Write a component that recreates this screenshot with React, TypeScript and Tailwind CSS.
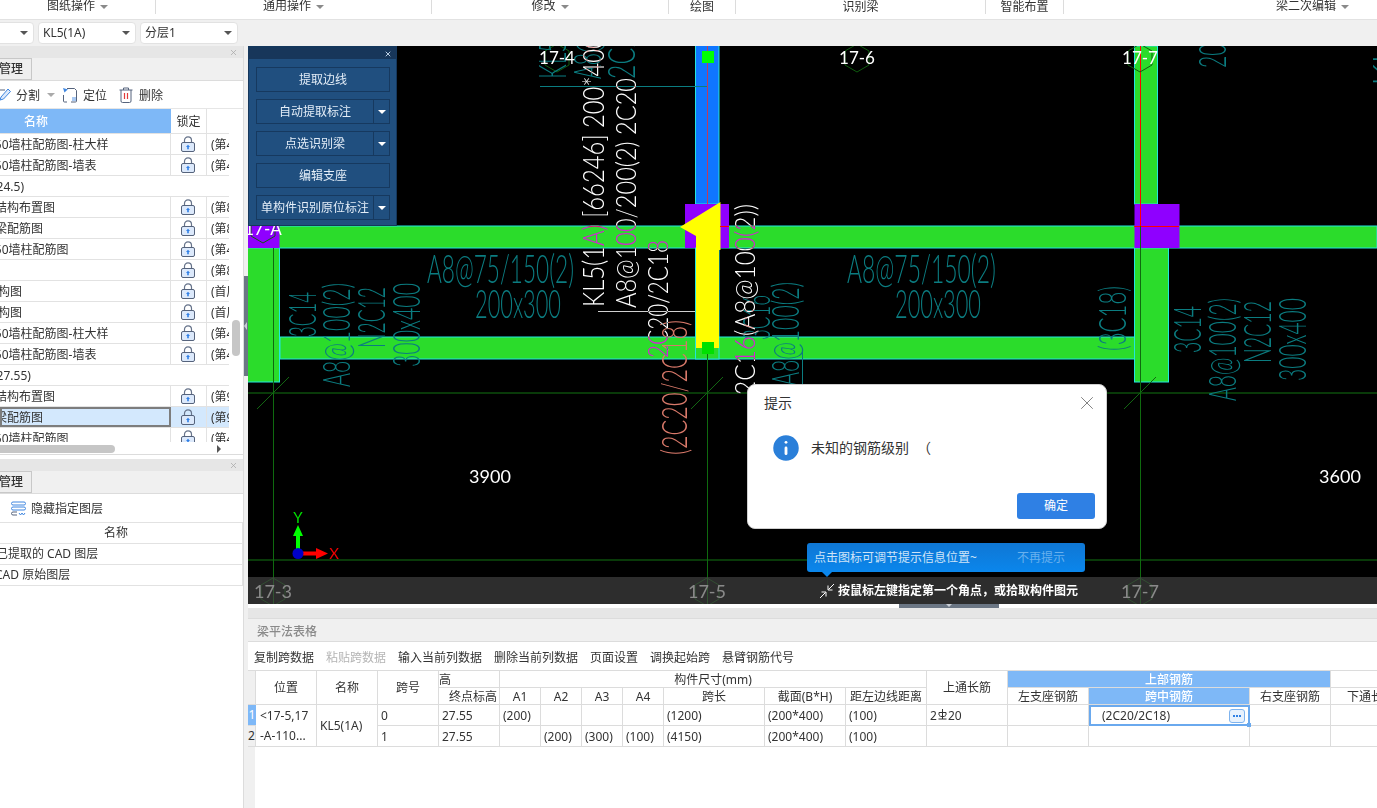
import React from 'react';
import { X, Info } from 'lucide-react';

const sans = "[font-family:'Noto_Sans','Noto_Sans_CJK_SC',sans-serif]";

const ribbon = [
    { label: '图纸操作', width: 'w-[156px]', caret: true },
    { label: '通用操作', width: 'w-[276px]', caret: true },
    { label: '修改', width: 'w-[237px]', caret: true },
    { label: '绘图', width: 'w-[67px]' },
    { label: '识别梁', width: 'w-[250px]' },
    { label: '智能布置', width: 'w-[78px]' },
    { label: '梁二次编辑', width: 'flex-1 pl-[184px] border-r-0', caret: true },
];

const layerRows = [
    { name: '150墙柱配筋图-柱大样', page: '(第4' },
    { name: '150墙柱配筋图-墙表', page: '(第4' },
    { group: '(24.5)' },
    { name: '结构布置图', page: '(第8', off: '-ml-[5px]' },
    { name: '梁配筋图', page: '(第8', off: '-ml-[5px]' },
    { name: '150墙柱配筋图', page: '(第4' },
    { name: '', page: '(第8' },
    { name: '结构图', page: '(首层', off: '-ml-[14px]' },
    { name: '结构图', page: '(首层', off: '-ml-[14px]' },
    { name: '150墙柱配筋图-柱大样', page: '(第4' },
    { name: '150墙柱配筋图-墙表', page: '(第4' },
    { group: '(27.55)' },
    { name: '结构布置图', page: '(第9', off: '-ml-[5px]' },
    { name: '梁配筋图', page: '(第9', off: '-ml-[7px]', selected: true },
    { name: '150墙柱配筋图', page: '(第4' },
];

const tableTools = ['复制跨数据', '粘贴跨数据', '输入当前列数据', '删除当前列数据', '页面设置', '调换起始跨', '悬臂钢筋代号'];

const LockIcon = () => (
    <svg width="14" height="16" viewBox="0 0 14 16" className="block">
        <path d="M3.500 7V4.300a3.500 3.500 0 0 1 7 0V7" fill="none" stroke="#66738a" strokeWidth="1.200" />
        <rect x="0.500" y="6.500" width="13" height="9" rx="1.500" fill="#dce9fb" stroke="#55637c" />
        <path d="M7 8.800l2 2.200H7.800v2.300H6.200V11H5z" fill="#2f7fe6" />
    </svg>
);

const Caret = ({ className = '' }: { className?: string }) => (
    <span className={`inline-block w-0 h-0 border-x-[4px] border-x-transparent border-t-[4px] border-t-[#8a8a8a] ${className}`} />
);

const Select = ({ text, width }: { text: string; width: string }) => (
    <div className={`${width} h-[22px] bg-white border border-[#e2e2e2] rounded-[4px] flex items-center justify-between pl-1 pr-[5px] text-xs text-[#333]`}>
        <span>{text}</span>
        <Caret className="border-t-[#555]" />
    </div>
);

const PanelHead = ({ label }: { label: string }) => (
    <>
        <div className="h-[12px] shrink-0 bg-[#e6e6e6] flex items-center justify-end pr-[5px]">
            <X size={9} className="text-[#a8a8a8]" />
        </div>
        <div className="h-[23px] shrink-0 bg-[#f0f0f0] border-b border-[#dcdcdc] flex">
            <div className="w-[32px] border-r border-y border-[#c8c8c8] bg-[#eeeeee] text-xs font-medium text-[#333] flex items-center justify-end pr-[8px] whitespace-nowrap">
                {label}
            </div>
        </div>
    </>
);

const Sidebar = () => (
    <div className="w-[244px] shrink-0 bg-white border-r border-[#dcdcdc] flex flex-col overflow-hidden">
        <div className="h-[409px] shrink-0 flex flex-col border-b border-[#dcdcdc]">
            <PanelHead label="管理" />
            <div className="h-[28px] flex items-center text-xs text-[#333] border-b border-[#e6e6e6] shrink-0">
                <svg width="11" height="16" viewBox="0 0 11 16" className="shrink-0">
                    <path d="M0 3h5" stroke="#55637c" fill="none" />
                    <path d="M8 2l2.500 2.500-7 7.500L0 13l1-3z" fill="#dce9fb" stroke="#3f86e0" />
                </svg>
                <span className="ml-[5px] pt-[2px]">分割</span>
                <Caret className="ml-[7px] border-x-[3px] border-t-[3px] border-t-[#aaa]" />
                <svg width="16" height="16" viewBox="0 0 16 16" className="ml-[7px] shrink-0">
                    <path d="M5 1.500h7.500l2 2V14a1 1 0 0 1-1 1H9M1.500 8v6a1 1 0 0 0 1 1H5" fill="none" stroke="#55637c" />
                    <path d="M1 1l5 1.500L4.300 3.700 2.500 5.500z" fill="#3f86e0" />
                    <rect x="10" y="10" width="4" height="4" fill="#a9c9f2" />
                </svg>
                <span className="ml-[5px] pt-[2px]">定位</span>
                <svg width="14" height="16" viewBox="0 0 14 16" className="ml-[12px] shrink-0">
                    <path d="M0.500 3h13M4.500 3V1h5v2M2 3v11a1.500 1.500 0 0 0 1.500 1.500h7A1.500 1.500 0 0 0 12 14V3" fill="none" stroke="#55637c" />
                    <path d="M5.500 6v6M8.500 6v6" stroke="#e23b3b" strokeWidth="1.200" />
                </svg>
                <span className="ml-[6px] pt-[2px]">删除</span>
            </div>
            <div className="flex-1 flex min-h-0">
                <div className="w-[229px] flex flex-col overflow-hidden">
                    <div className="flex flex-col h-[333px] overflow-hidden shrink-0">
                        <div className="h-[25px] flex shrink-0 border-b border-[#e2e2e2] text-xs">
                            <div className="w-[171px] bg-[#7eb8f7] text-white font-medium flex items-center pl-[24px] pt-[2px]">名称</div>
                            <div className="w-[36px] border-r border-[#e2e2e2] text-[#333] flex items-center justify-center pt-[2px]">锁定</div>
                        </div>
                        {layerRows.map((row, i) =>
                            row.group ? (
                                <div key={i} className="h-[21px] shrink-0 border-b border-[#e2e2e2] text-xs text-[#333] flex items-center -ml-[7px] pt-[1px]">{row.group}</div>
                            ) : (
                                <div key={i} className="h-[21px] shrink-0 border-b border-[#e2e2e2] flex text-xs text-[#333]">
                                    <div className={`w-[171px] shrink-0 flex items-center overflow-hidden pt-[1px] ${row.selected ? 'bg-[#d3e8fd] border-2 border-[#7d7d7d]' : 'border-r border-[#e2e2e2]'}`}>
                                        <span className={`whitespace-nowrap ${row.off ?? '-ml-[12px]'}`}>{row.name}</span>
                                    </div>
                                    <div className={`w-[36px] shrink-0 flex items-center justify-center border-r border-[#e2e2e2] pr-px ${row.selected ? 'bg-[#d3e8fd]' : ''}`}>
                                        <LockIcon />
                                    </div>
                                    <div className={`flex-1 overflow-hidden whitespace-nowrap flex items-center pl-[4px] pt-[1px] ${row.selected ? 'bg-[#d3e8fd]' : ''}`}>{row.page}</div>
                                </div>
                            ),
                        )}
                    </div>
                    <div className="h-[14px] shrink-0 flex items-center pr-[8px]">
                        <div className="w-[115px] h-[8px] rounded-r-full bg-[#c6c6c6]" />
                        <span className="ml-auto w-0 h-0 border-y-[4px] border-y-transparent border-l-[4px] border-l-[#555]" />
                    </div>
                </div>
                <div className="flex-1 relative">
                    <div className="absolute left-[3px] top-[211px] w-[8px] h-[36px] rounded-full bg-[#c6c6c6]" />
                </div>
            </div>
        </div>
        <div className="h-[4px] shrink-0" />
        <PanelHead label="管理" />
        <div className="h-[28px] shrink-0 flex items-center pl-[11px] text-xs text-[#333]">
            <svg width="15" height="15" viewBox="0 0 15 15" className="shrink-0">
                <rect x="0.500" y="1" width="14" height="3" rx="1.500" fill="none" stroke="#3f86e0" />
                <rect x="0.500" y="6" width="14" height="3" rx="1.500" fill="none" stroke="#3f86e0" />
                <path d="M6 11H2a1.500 1.500 0 0 0 0 3h4" fill="none" stroke="#55637c" />
                <path d="M8 12l1.500 2 1.500-2 1.500 2 1.500-2" fill="none" stroke="#3f86e0" />
            </svg>
            <span className="ml-[5px] pt-[2px]">隐藏指定图层</span>
        </div>
        <div className="text-xs text-[#333] border-t border-[#e2e2e2]">
            <div className="h-[21px] border-b border-r border-[#e2e2e2] flex items-center justify-center pr-[10px]">名称</div>
            <div className="h-[21px] border-b border-r border-[#e2e2e2] flex items-center whitespace-nowrap overflow-hidden"><span className="-ml-[4px]">已提取的 CAD 图层</span></div>
            <div className="h-[21px] border-b border-r border-[#e2e2e2] flex items-center whitespace-nowrap overflow-hidden"><span className="-ml-[5px]">CAD 原始图层</span></div>
        </div>
    </div>
);

const tealText = 'fill-[#0b7c80] [font-family:Lato,sans-serif] font-light';
const whiteText = 'fill-white mix-blend-difference [font-family:Lato,sans-serif] font-light';

// upward reading drawing text: x is the baseline, y the start of the string, len its length on screen
const Up = ({ x, y, len, size, className, children }: { x: number; y: number; len: number; size: number; className: string; children: string }) => (
    <text transform={`translate(${x} ${y}) rotate(-90)`} fontSize={size} textLength={len} lengthAdjust="spacingAndGlyphs" className={className}>
        {children}
    </text>
);

const Flat = ({ x, y, len, size, className, children }: { x: number; y: number; len: number; size: number; className: string; children: string }) => (
    <text x={x} y={y} fontSize={size} textLength={len} lengthAdjust="spacingAndGlyphs" className={className}>
        {children}
    </text>
);

const Hex = ({ cx, cy }: { cx: number; cy: number }) => (
    <polygon
        points={`${cx},${cy - 14} ${cx + 12},${cy - 7} ${cx + 12},${cy + 7} ${cx},${cy + 14} ${cx - 12},${cy + 7} ${cx - 12},${cy - 7}`}
        fill="none"
        stroke="#0f5c0f"
    />
);

const Tick = ({ x, y }: { x: number; y: number }) => <path d={`M${x - 16} ${y + 16}L${x + 16} ${y - 16}`} stroke="#126612" />;

const Drawing = () => (
    <svg viewBox="248 46 1129 558" width="1129" height="558" className="absolute inset-0 bg-black">
        {/* grid lines */}
        <path d="M248 393H1377M248 560H1377" stroke="#0c4d0c" strokeWidth="1.500" />

        {/* beams */}
        <rect x="248" y="226" width="1129" height="22" fill="#2bdc2b" stroke="#22e6df" />
        <rect x="280" y="337" width="855" height="22" fill="#2bdc2b" stroke="#22e6df" />
        <rect x="240" y="248" width="39.500" height="134" fill="#2bdc2b" stroke="#22e6df" />
        <rect x="240" y="204" width="39.500" height="44" fill="#8f00ff" />
        <rect x="1134.500" y="46" width="23" height="158" fill="#2bdc2b" stroke="#22e6df" />
        <rect x="1134.500" y="248" width="34" height="134" fill="#2bdc2b" stroke="#22e6df" />
        <rect x="1134.500" y="204" width="45" height="44" fill="#8f00ff" />
        <rect x="695.500" y="40" width="23.500" height="164" fill="#0f76ff" stroke="#22e6df" />
        <rect x="685" y="204" width="44" height="44" fill="#8f00ff" />
        <rect x="695.500" y="248" width="23.500" height="111" fill="#2bdc2b" stroke="#22e6df" />
        <path d="M707.500 46V204" stroke="#c23b5a" strokeWidth="1" />
        <path d="M680 227L720.500 202V250H719V348H696V236Z" fill="#ffff00" />
        <rect x="702" y="51" width="12" height="12" fill="#00ff00" />
        <rect x="702" y="342" width="12" height="12" fill="#00e000" />
        <path d="M1140.500 46V226" stroke="#ff0000" />
        <path d="M1134 226.500H1179" stroke="#ff0000" />
        <path d="M720 226.500H729" stroke="#ff0000" />

        {/* axis lines */}
        <path d="M273.500 248V604M707.500 354V604M1140.500 226V604" stroke="#0f6a0f" />
        <Tick x={273} y={393} />
        <Tick x={707} y={393} />
        <Tick x={1140} y={393} />
        <Hex cx={273} cy={592} />
        <Hex cx={707} cy={592} />
        <Hex cx={1140} cy={592} />
        <Hex cx={557} cy={58} />
        <Hex cx={857} cy={58} />
        <Hex cx={1140} cy={58} />
        <Hex cx={263} cy={229} />
        <path d="M540 86.500H707" stroke="#0b7c80" />

        {/* teal annotations */}
        <Flat x={427} y={283} len={147} size={39} className={tealText}>A8@75/150(2)</Flat>
        <Flat x={475} y={318} len={86} size={39} className={tealText}>200x300</Flat>
        <Flat x={847} y={283} len={149} size={39} className={tealText}>A8@75/150(2)</Flat>
        <Flat x={895} y={318} len={86} size={39} className={tealText}>200x300</Flat>
        <Up x={316} y={337} len={45} size={38} className={tealText}>3C14</Up>
        <Up x={350} y={387} len={104} size={38} className={tealText}>A8@100(2)</Up>
        <Up x={385} y={348} len={61} size={38} className={tealText}>N2C12</Up>
        <Up x={420} y={367} len={84} size={38} className={tealText}>300x400</Up>
        <Up x={1126} y={351} len={65} size={38} className={tealText}>(3C18)</Up>
        <Up x={1201} y={353} len={47} size={38} className={tealText}>3C14</Up>
        <Up x={1236} y={401} len={103} size={38} className={tealText}>A8@100(2)</Up>
        <Up x={1271} y={363} len={62} size={38} className={tealText}>N2C12</Up>
        <Up x={1306} y={381} len={83} size={38} className={tealText}>300x400</Up>
        <Up x={770} y={340} len={45} size={38} className={tealText}>3C16</Up>
        <Up x={799} y={386} len={104} size={38} className={tealText}>A8@100(2)</Up>
        <path d="M802.500 349V386" stroke="#0b7c80" />
        <Up x={566} y={79} len={80} size={38} className={tealText}>KL5(1A)</Up>
        <Up x={601} y={79} len={80} size={38} className={tealText}>A8@100</Up>
        <Up x={635} y={79} len={60} size={38} className={tealText}>2C20</Up>
        <Up x={1226} y={68} len={84} size={38} className={tealText}>200x300</Up>
        <Up x={1400} y={86} len={60} size={38} className={tealText}>KL5</Up>

        {/* selected beam text */}
        <Up x={687} y={455} len={135} size={35} className="fill-[#d9796a] [font-family:Lato,sans-serif] font-light">(2C20/2C18)</Up>
        <path d="M598 311.500H695" stroke="#d0d0d0" />
        <Up x={604} y={307} len={272} size={30} className={whiteText}>KL5(1A) [66246] 200*400</Up>
        <Up x={636} y={308} len={230} size={28} className={whiteText}>A8@100/200(2) 2C20</Up>
        <Up x={668} y={358} len={118} size={28} className={whiteText}>2C20/2C18</Up>
        <Up x={755} y={395} len={191} size={28} className={whiteText}>2C16(A8@100(2))</Up>

        {/* labels */}
        <text x="557" y="64" fontSize="17" textAnchor="middle" className="fill-white [font-family:Lato,sans-serif]">17-4</text>
        <text x="857" y="64" fontSize="17" textAnchor="middle" className="fill-white [font-family:Lato,sans-serif]">17-6</text>
        <text x="1140" y="64" fontSize="17" textAnchor="middle" className="fill-white [font-family:Lato,sans-serif]">17-7</text>
        <text x="263" y="235" fontSize="17" textAnchor="middle" className="fill-white [font-family:Lato,sans-serif]">17-A</text>
        <text x="490" y="483" fontSize="18" textAnchor="middle" className="fill-white [font-family:Lato,sans-serif]">3900</text>
        <text x="1340" y="483" fontSize="18" textAnchor="middle" className="fill-white [font-family:Lato,sans-serif]">3600</text>
        <text x="273" y="598" fontSize="18" textAnchor="middle" className="fill-white [font-family:Lato,sans-serif]">17-3</text>
        <text x="707" y="598" fontSize="18" textAnchor="middle" className="fill-white [font-family:Lato,sans-serif]">17-5</text>
        <text x="1140" y="598" fontSize="18" textAnchor="middle" className="fill-white [font-family:Lato,sans-serif]">17-7</text>

        {/* origin marker */}
        <path d="M296 550V536H293L298 525L303 536H300V550Z" fill="#00ff00" />
        <path d="M303 551.500H316V548L328 553.500L316 559V555.500H303Z" fill="#ff0000" />
        <circle cx="298" cy="553.500" r="5.500" fill="#0000c8" />
        <text x="298" y="523" fontSize="15" textAnchor="middle" className="fill-[#00dd00] [font-family:Lato,sans-serif]">Y</text>
        <text x="334" y="559" fontSize="15" textAnchor="middle" className="fill-[#ee0000] [font-family:Lato,sans-serif]">X</text>
    </svg>
);

const PanelButton = ({ label, split = false }: { label: string; split?: boolean }) => (
    <div className="h-[25px] flex text-xs text-[#e4eef8]">
        <div className="flex-1 border border-[#16395f] flex items-center justify-center pt-[1px]">{label}</div>
        {split && (
            <div className="w-[16px] border border-l-0 border-[#16395f] flex items-center justify-center">
                <Caret className="border-t-white" />
            </div>
        )}
    </div>
);

const FloatPanel = () => (
    <div className="absolute left-0 top-0 w-[149px] h-[180px] bg-[#204f7f] border border-[#15375c] border-t-2">
        <div className="h-[11px] bg-[#17365a] flex items-center justify-end pr-[4px]">
            <X size={8} strokeWidth={3} className="text-[#b9cde2]" />
        </div>
        <div className="flex flex-col gap-[7px] pl-[7px] pr-[6px] pt-[8px]">
            <PanelButton label="提取边线" />
            <PanelButton label="自动提取标注" split />
            <PanelButton label="点选识别梁" split />
            <PanelButton label="编辑支座" />
            <PanelButton label="单构件识别原位标注" split />
        </div>
    </div>
);

const Dialog = () => (
    <div className="absolute left-[499px] top-[338px] w-[360px] h-[145px] bg-white rounded-lg border border-[#cfcfcf] flex flex-col">
        <div className="flex items-center justify-between pl-[16px] pr-[8px] pt-[7px] text-sm text-[#333]">
            <span>提示</span>
            <X size={22} strokeWidth={1} className="text-[#777]" />
        </div>
        <div className="flex items-center pl-[21px] mt-[17px] text-sm text-[#333]">
            <Info size={34} fill="#2a7fd9" stroke="#fff" strokeWidth={2} className="shrink-0" />
            <span className="ml-[8px]">未知的钢筋级别</span>
            <span className="ml-[8px]">（</span>
        </div>
        <div className="mt-auto mb-[9px] mr-[11px] self-end w-[78px] h-[26px] bg-[#2f80e4] rounded-[3px] text-xs text-white flex items-center justify-center">确定</div>
    </div>
);

const StatusTip = () => (
    <>
        <div className="absolute left-[559px] top-[497px] w-[278px] h-[29px] rounded-[3px] bg-gradient-to-b from-[#0f77d4] to-[#0a86ec] flex items-center justify-between pl-[7px] pr-[20px] text-xs">
            <span className="text-[#cfe4f8]">点击图标可调节提示信息位置~</span>
            <span className="text-[#69b1ee]">不再提示</span>
        </div>
        <div className="absolute left-[574px] top-[526px] w-0 h-0 border-x-[5px] border-x-transparent border-t-[5px] border-t-[#0a86ec]" />
        <div className="absolute left-0 right-0 bottom-0 h-[27px] bg-[#464646a3] flex items-center pl-[571px] text-xs font-bold text-white">
            <svg width="16" height="16" viewBox="0 0 16 16" className="shrink-0" fill="none" stroke="#fff">
                <path d="M15 1L9.500 6.500M9 2.500V7H13.500M1 15L6.500 9.500M2.500 9H7V13.500" />
            </svg>
            <span className="ml-[3px]">按鼠标左键指定第一个角点，或拾取构件图元</span>
        </div>
    </>
);

const cell = 'border-r border-b border-[#dcdcdc] flex items-center text-xs text-[#333] overflow-hidden whitespace-nowrap pt-[1px]';
const head = `${cell} justify-center`;

const BeamTable = () => (
    <div className="grid grid-cols-[8px_61px_61px_61px_61px_41px_41px_41px_41px_101px_81px_81px_81px_81px_161px_81px_81px] grid-rows-[17px_17px_21px_21px] border-t border-[#dcdcdc] relative w-max">
        <div className="row-span-2 bg-[#f0f0f0] border-r border-b border-[#dcdcdc]" />
        <div className={`${head} row-span-2`}>位置</div>
        <div className={`${head} row-span-2`}>名称</div>
        <div className={`${head} row-span-2`}>跨号</div>
        <div className={cell}>高</div>
        <div className={`${head} col-span-7`}>构件尺寸(mm)</div>
        <div className={`${head} row-span-2`}>上通长筋</div>
        <div className={`${head} col-span-3 bg-[#7eb8f7] !text-white font-medium`}>上部钢筋</div>
        <div className="border-b border-[#dcdcdc]" />

        <div className={`${cell} justify-end pr-[2px]`}>终点标高</div>
        {['A1', 'A2', 'A3', 'A4', '跨长', '截面(B*H)', '距左边线距离'].map(t => (
            <div key={t} className={head}>{t}</div>
        ))}
        <div className={head}>左支座钢筋</div>
        <div className={`${head} bg-[#7eb8f7] !text-white font-medium`}>跨中钢筋</div>
        <div className={head}>右支座钢筋</div>
        <div className={head}>下通长筋</div>

        <div className="bg-[#7eb8f7] border-b border-[#dcdcdc] text-xs text-white flex items-center justify-center">1</div>
        <div className={`${cell} row-span-2 flex-col !items-start justify-center pl-[4px] leading-[20px]`}>
            <span>&lt;17-5,17</span>
            <span>-A-110...</span>
        </div>
        <div className={`${cell} row-span-2 pl-[3px]`}>KL5(1A)</div>
        <div className={`${cell} pl-[3px]`}>0</div>
        <div className={`${cell} pl-[3px]`}>27.55</div>
        <div className={`${cell} pl-[3px]`}>(200)</div>
        <div className={cell} />
        <div className={cell} />
        <div className={cell} />
        <div className={`${cell} pl-[3px]`}>(1200)</div>
        <div className={`${cell} pl-[3px]`}>(200*400)</div>
        <div className={`${cell} pl-[3px]`}>(100)</div>
        <div className={`${cell} pl-[3px]`}>
            2
            <svg width="9" height="11" viewBox="0 0 9 11" className="mx-[1px] -mt-[3px]" fill="none" stroke="#333">
                <path d="M4.500 0V10M1 6V3.500h7V6M1 6.500C3 8 6 8 8 6.500M0.500 10h8" />
            </svg>
            20
        </div>
        <div className={cell} />
        <div className="border-2 border-[#6aa9ee] flex items-center justify-between pl-[11px] pr-[3px] text-xs text-[#333] relative">
            <span className="pt-[1px]">(2C20/2C18)</span>
            <span className="w-[16px] h-[14px] rounded-[3px] border border-[#7eb3ee] bg-[#e8f2fd] flex items-center justify-center gap-[1px]">
                <i className="w-[2px] h-[2px] bg-[#2f80e4]" />
                <i className="w-[2px] h-[2px] bg-[#2f80e4]" />
                <i className="w-[2px] h-[2px] bg-[#2f80e4]" />
            </span>
            <span className="absolute -right-[3px] -bottom-[3px] w-[4px] h-[4px] bg-[#6aa9ee]" />
        </div>
        <div className={cell} />
        <div className={cell} />

        <div className="bg-[#f0f0f0] border-r border-b border-[#dcdcdc] text-xs text-[#333] flex items-center justify-center">2</div>
        <div className={`${cell} pl-[3px]`}>1</div>
        <div className={`${cell} pl-[3px]`}>27.55</div>
        <div className={cell} />
        <div className={`${cell} pl-[3px]`}>(200)</div>
        <div className={`${cell} pl-[3px]`}>(300)</div>
        <div className={`${cell} pl-[3px]`}>(100)</div>
        <div className={`${cell} pl-[3px]`}>(4150)</div>
        <div className={`${cell} pl-[3px]`}>(200*400)</div>
        <div className={`${cell} pl-[3px]`}>(100)</div>
        {[0, 1, 2, 3, 4].map(i => (
            <div key={i} className={cell} />
        ))}
    </div>
);

const App: React.FC = () => (
    <div className={`w-[1377px] h-[808px] overflow-hidden bg-white flex flex-col ${sans}`}>
        <div className="h-[20px] shrink-0 flex border-b border-[#e2e2e2] text-xs text-[#333]">
            {ribbon.map(r => (
                <div key={r.label} className={`${r.width} h-[15px] flex items-center justify-center gap-[5px] border-r border-[#dcdcdc] -mt-px`}>
                    <span className={r.caret ? '-mt-[2px]' : 'mt-[1px]'}>{r.label}</span>
                    {r.caret && <Caret />}
                </div>
            ))}
        </div>
        <div className="h-[26px] shrink-0 bg-[#f0f0f0] flex items-center gap-[4px] -ml-[64px] pl-0">
            <Select text="" width="w-[98px]" />
            <Select text="KL5(1A)" width="w-[98px]" />
            <Select text="分层1" width="w-[98px]" />
        </div>
        <div className="flex-1 flex min-h-0">
            <Sidebar />
            <div className="w-[4px] shrink-0 bg-[#f0f0f0] relative">
                <div className="absolute top-[230px] inset-x-0 h-[100px] bg-[#6b7684] flex items-center">
                    <span className="w-0 h-0 border-y-[4px] border-y-transparent border-r-[3px] border-r-[#c9ced6]" />
                </div>
            </div>
            <div className="flex-1 min-w-0 flex flex-col">
                <div className="h-[558px] shrink-0 relative overflow-hidden">
                    <Drawing />
                    <FloatPanel />
                    <StatusTip />
                    <Dialog />
                </div>
                <div className="h-[4px] shrink-0 relative bg-white">
                    <div className="absolute left-[651px] w-[100px] h-full bg-[#6b7684] flex justify-center">
                        <span className="w-0 h-0 border-x-[3px] border-x-transparent border-t-[3px] border-t-[#c9ced6]" />
                    </div>
                </div>
                <div className="h-[10px] shrink-0 bg-[#e6e6e6]" />
                <div className="h-[24px] shrink-0 bg-[#f0f0f0] border-y border-[#dcdcdc] flex items-center pl-[9px] pt-[3px] text-xs font-medium text-[#8a8a8a]">梁平法表格</div>
                <div className="h-[28px] shrink-0 flex items-center gap-[12px] pl-[6px] pt-[3px] text-xs text-[#333]">
                    {tableTools.map(t => (
                        <span key={t} className={t === '粘贴跨数据' ? 'text-[#b5b5b5]' : ''}>{t}</span>
                    ))}
                </div>
                <div className="flex-1 min-h-0 relative overflow-hidden">
                    <BeamTable />
                    <div className="absolute left-0 top-[77px] bottom-0 w-[7px] bg-[#f0f0f0]" />
                </div>
            </div>
        </div>
    </div>
);

export default App;
